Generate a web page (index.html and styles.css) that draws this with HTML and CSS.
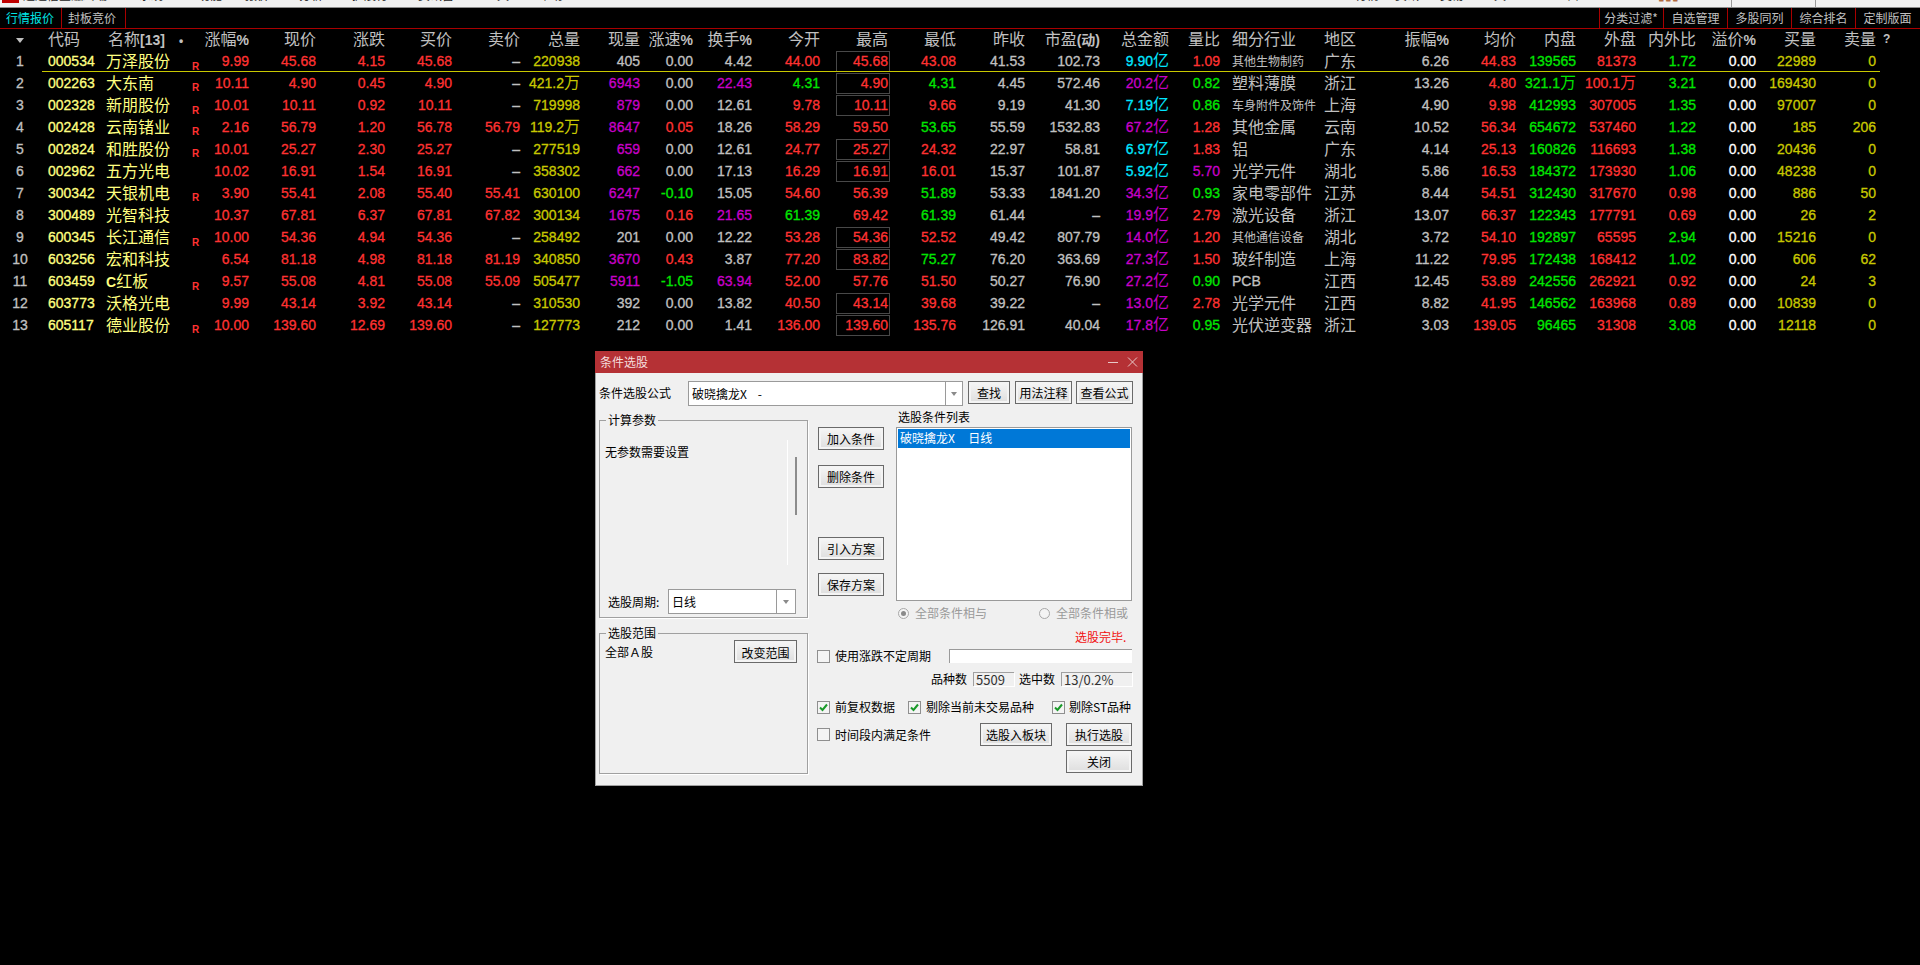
FILE: index.html
```html
<!DOCTYPE html>
<html lang="zh-CN">
<head>
<meta charset="utf-8">
<title>行情报价</title>
<link rel="stylesheet" href="styles.css">
</head>
<body>
<div class="topbar">
  <span class="logo"></span>
  <span class="mi m0">通达信金融终端</span>
  <span class="mi m1">系统</span>
  <span class="mi m2">功能</span>
  <span class="mi m3">报价</span>
  <span class="mi m4">分析</span>
  <span class="mi m5">扩展行</span>
  <span class="mi m6">资讯窗</span>
  <span class="mi m7">工具</span>
  <span class="mi m8">帮助</span>
  <span class="tb-spacer"></span>
  <span class="mi t1">行情</span>
  <span class="mi t2">资讯</span>
  <span class="mi t3">交易</span>
  <span class="mi t4">工具</span>
  <span class="mi t5">一</span>
  <span class="mi t6">口</span>
  <span class="mi t7 tone">▮▮▮</span>
  <span class="sep"></span>
  <span class="sep s2"></span>
</div>
<div class="tabs">
  <span class="tab on">行情报价</span>
  <span class="tab">封板竞价</span>
  <span class="tab-spacer"></span>
  <span class="rtab rf">分类过滤*</span>
  <span class="rtab">自选管理</span>
  <span class="rtab">多股同列</span>
  <span class="rtab">综合排名</span>
  <span class="rtab rl">定制版面</span>
</div>
<div class="quotes">
  <div class="row head">
    <span class="ctr"><em class="sort"></em></span><span class="l pl8">代码</span><span class="l pl10">名称<b>[13]</b><b class="dot">•</b></span><span></span>
    <span>涨幅<b>%</b></span><span>现价</span><span>涨跌</span><span>买价</span><span>卖价</span><span>总量</span><span>现量</span><span>涨速<b>%</b></span><span>换手<b>%</b></span><span>今开</span><span>最高</span><span>最低</span><span>昨收</span><span>市盈<b>(动)</b></span><span>总金额</span><span>量比</span><span class="l pl12">细分行业</span><span class="l">地区</span><span>振幅<b>%</b></span><span>均价</span><span>内盘</span><span>外盘</span><span>内外比</span><span>溢价<b>%</b></span><span>买量</span><span>卖量</span><span class="l q">?</span>
  </div>
  <div class="row sel"><span class="ctr">1</span><span class="l pl8 code">000534</span><span class="l pl8 nm">万泽股份</span><span class="rr">R</span><span class="r">9.99</span><span class="r">45.68</span><span class="r">4.15</span><span class="r">45.68</span><span>–</span><span class="y">220938</span><span>405</span><span>0.00</span><span>4.42</span><span class="r">44.00</span><span class="r bx">45.68</span><span class="r">43.08</span><span>41.53</span><span>102.73</span><span class="c">9.90<i>亿</i></span><span class="r">1.09</span><span class="l pl12 sm">其他生物制药</span><span class="l reg">广东</span><span>6.26</span><span class="r">44.83</span><span class="g">139565</span><span class="r">81373</span><span class="g">1.72</span><span class="w">0.00</span><span class="y">22989</span><span class="y">0</span></div>
  <div class="row"><span class="ctr">2</span><span class="l pl8 code">002263</span><span class="l pl8 nm">大东南</span><span class="rr">R</span><span class="r">10.11</span><span class="r">4.90</span><span class="r">0.45</span><span class="r">4.90</span><span>–</span><span class="y">421.2<i>万</i></span><span class="m">6943</span><span>0.00</span><span class="m">22.43</span><span class="g">4.31</span><span class="r bx">4.90</span><span class="g">4.31</span><span>4.45</span><span>572.46</span><span class="m">20.2<i>亿</i></span><span class="g">0.82</span><span class="l pl12 ind">塑料薄膜</span><span class="l reg">浙江</span><span>13.26</span><span class="r">4.80</span><span class="g">321.1<i>万</i></span><span class="r">100.1<i>万</i></span><span class="g">3.21</span><span class="w">0.00</span><span class="y">169430</span><span class="y">0</span></div>
  <div class="row"><span class="ctr">3</span><span class="l pl8 code">002328</span><span class="l pl8 nm">新朋股份</span><span class="rr">R</span><span class="r">10.01</span><span class="r">10.11</span><span class="r">0.92</span><span class="r">10.11</span><span>–</span><span class="y">719998</span><span class="m">879</span><span>0.00</span><span>12.61</span><span class="r">9.78</span><span class="r bx">10.11</span><span class="r">9.66</span><span>9.19</span><span>41.30</span><span class="c">7.19<i>亿</i></span><span class="g">0.86</span><span class="l pl12 sm">车身附件及饰件</span><span class="l reg">上海</span><span>4.90</span><span class="r">9.98</span><span class="g">412993</span><span class="r">307005</span><span class="g">1.35</span><span class="w">0.00</span><span class="y">97007</span><span class="y">0</span></div>
  <div class="row"><span class="ctr">4</span><span class="l pl8 code">002428</span><span class="l pl8 nm">云南锗业</span><span class="rr">R</span><span class="r">2.16</span><span class="r">56.79</span><span class="r">1.20</span><span class="r">56.78</span><span class="r">56.79</span><span class="y">119.2<i>万</i></span><span class="m">8647</span><span class="r">0.05</span><span>18.26</span><span class="r">58.29</span><span class="r">59.50</span><span class="g">53.65</span><span>55.59</span><span>1532.83</span><span class="m">67.2<i>亿</i></span><span class="r">1.28</span><span class="l pl12 ind">其他金属</span><span class="l reg">云南</span><span>10.52</span><span class="r">56.34</span><span class="g">654672</span><span class="r">537460</span><span class="g">1.22</span><span class="w">0.00</span><span class="y">185</span><span class="y">206</span></div>
  <div class="row"><span class="ctr">5</span><span class="l pl8 code">002824</span><span class="l pl8 nm">和胜股份</span><span class="rr">R</span><span class="r">10.01</span><span class="r">25.27</span><span class="r">2.30</span><span class="r">25.27</span><span>–</span><span class="y">277519</span><span class="m">659</span><span>0.00</span><span>12.61</span><span class="r">24.77</span><span class="r bx">25.27</span><span class="r">24.32</span><span>22.97</span><span>58.81</span><span class="c">6.97<i>亿</i></span><span class="r">1.83</span><span class="l pl12 ind">铝</span><span class="l reg">广东</span><span>4.14</span><span class="r">25.13</span><span class="g">160826</span><span class="r">116693</span><span class="g">1.38</span><span class="w">0.00</span><span class="y">20436</span><span class="y">0</span></div>
  <div class="row"><span class="ctr">6</span><span class="l pl8 code">002962</span><span class="l pl8 nm">五方光电</span><span></span><span class="r">10.02</span><span class="r">16.91</span><span class="r">1.54</span><span class="r">16.91</span><span>–</span><span class="y">358302</span><span class="m">662</span><span>0.00</span><span>17.13</span><span class="r">16.29</span><span class="r bx">16.91</span><span class="r">16.01</span><span>15.37</span><span>101.87</span><span class="c">5.92<i>亿</i></span><span class="m">5.70</span><span class="l pl12 ind">光学元件</span><span class="l reg">湖北</span><span>5.86</span><span class="r">16.53</span><span class="g">184372</span><span class="r">173930</span><span class="g">1.06</span><span class="w">0.00</span><span class="y">48238</span><span class="y">0</span></div>
  <div class="row"><span class="ctr">7</span><span class="l pl8 code">300342</span><span class="l pl8 nm">天银机电</span><span class="rr">R</span><span class="r">3.90</span><span class="r">55.41</span><span class="r">2.08</span><span class="r">55.40</span><span class="r">55.41</span><span class="y">630100</span><span class="m">6247</span><span class="g">-0.10</span><span>15.05</span><span class="r">54.60</span><span class="r">56.39</span><span class="g">51.89</span><span>53.33</span><span>1841.20</span><span class="m">34.3<i>亿</i></span><span class="g">0.93</span><span class="l pl12 ind">家电零部件</span><span class="l reg">江苏</span><span>8.44</span><span class="r">54.51</span><span class="g">312430</span><span class="r">317670</span><span class="r">0.98</span><span class="w">0.00</span><span class="y">886</span><span class="y">50</span></div>
  <div class="row"><span class="ctr">8</span><span class="l pl8 code">300489</span><span class="l pl8 nm">光智科技</span><span></span><span class="r">10.37</span><span class="r">67.81</span><span class="r">6.37</span><span class="r">67.81</span><span class="r">67.82</span><span class="y">300134</span><span class="m">1675</span><span class="r">0.16</span><span class="m">21.65</span><span class="g">61.39</span><span class="r">69.42</span><span class="g">61.39</span><span>61.44</span><span>–</span><span class="m">19.9<i>亿</i></span><span class="r">2.79</span><span class="l pl12 ind">激光设备</span><span class="l reg">浙江</span><span>13.07</span><span class="r">66.37</span><span class="g">122343</span><span class="r">177791</span><span class="r">0.69</span><span class="w">0.00</span><span class="y">26</span><span class="y">2</span></div>
  <div class="row"><span class="ctr">9</span><span class="l pl8 code">600345</span><span class="l pl8 nm">长江通信</span><span class="rr">R</span><span class="r">10.00</span><span class="r">54.36</span><span class="r">4.94</span><span class="r">54.36</span><span>–</span><span class="y">258492</span><span>201</span><span>0.00</span><span>12.22</span><span class="r">53.28</span><span class="r bx">54.36</span><span class="r">52.52</span><span>49.42</span><span>807.79</span><span class="m">14.0<i>亿</i></span><span class="r">1.20</span><span class="l pl12 sm">其他通信设备</span><span class="l reg">湖北</span><span>3.72</span><span class="r">54.10</span><span class="g">192897</span><span class="r">65595</span><span class="g">2.94</span><span class="w">0.00</span><span class="y">15216</span><span class="y">0</span></div>
  <div class="row"><span class="ctr">10</span><span class="l pl8 code">603256</span><span class="l pl8 nm">宏和科技</span><span></span><span class="r">6.54</span><span class="r">81.18</span><span class="r">4.98</span><span class="r">81.18</span><span class="r">81.19</span><span class="y">340850</span><span class="m">3670</span><span class="r">0.43</span><span>3.87</span><span class="r">77.20</span><span class="r bx">83.82</span><span class="g">75.27</span><span>76.20</span><span>363.69</span><span class="m">27.3<i>亿</i></span><span class="r">1.50</span><span class="l pl12 ind">玻纤制造</span><span class="l reg">上海</span><span>11.22</span><span class="r">79.95</span><span class="g">172438</span><span class="r">168412</span><span class="g">1.02</span><span class="w">0.00</span><span class="y">606</span><span class="y">62</span></div>
  <div class="row"><span class="ctr">11</span><span class="l pl8 code">603459</span><span class="l pl8 nm"><b>C</b>红板</span><span class="rr">R</span><span class="r">9.57</span><span class="r">55.08</span><span class="r">4.81</span><span class="r">55.08</span><span class="r">55.09</span><span class="y">505477</span><span class="m">5911</span><span class="g">-1.05</span><span class="m">63.94</span><span class="r">52.00</span><span class="r">57.76</span><span class="r">51.50</span><span>50.27</span><span>76.90</span><span class="m">27.2<i>亿</i></span><span class="g">0.90</span><span class="l pl12">PCB</span><span class="l reg">江西</span><span>12.45</span><span class="r">53.89</span><span class="g">242556</span><span class="r">262921</span><span class="r">0.92</span><span class="w">0.00</span><span class="y">24</span><span class="y">3</span></div>
  <div class="row"><span class="ctr">12</span><span class="l pl8 code">603773</span><span class="l pl8 nm">沃格光电</span><span></span><span class="r">9.99</span><span class="r">43.14</span><span class="r">3.92</span><span class="r">43.14</span><span>–</span><span class="y">310530</span><span>392</span><span>0.00</span><span>13.82</span><span class="r">40.50</span><span class="r bx">43.14</span><span class="r">39.68</span><span>39.22</span><span>–</span><span class="m">13.0<i>亿</i></span><span class="r">2.78</span><span class="l pl12 ind">光学元件</span><span class="l reg">江西</span><span>8.82</span><span class="r">41.95</span><span class="g">146562</span><span class="r">163968</span><span class="r">0.89</span><span class="w">0.00</span><span class="y">10839</span><span class="y">0</span></div>
  <div class="row"><span class="ctr">13</span><span class="l pl8 code">605117</span><span class="l pl8 nm">德业股份</span><span class="rr">R</span><span class="r">10.00</span><span class="r">139.60</span><span class="r">12.69</span><span class="r">139.60</span><span>–</span><span class="y">127773</span><span>212</span><span>0.00</span><span>1.41</span><span class="r">136.00</span><span class="r bx">139.60</span><span class="r">135.76</span><span>126.91</span><span>40.04</span><span class="m">17.8<i>亿</i></span><span class="g">0.95</span><span class="l pl12 ind">光伏逆变器</span><span class="l reg">浙江</span><span>3.03</span><span class="r">139.05</span><span class="g">96465</span><span class="r">31308</span><span class="g">3.08</span><span class="w">0.00</span><span class="y">12118</span><span class="y">0</span></div>
</div>

<div class="dialog">
  <div class="title"><span>条件选股</span>
    <svg class="winbtns" width="30" height="12" viewBox="0 0 30 12"><path d="M0 6.5H10" stroke="#e8c8c8" fill="none"/><path d="M20 1.5L29 10.5M29 1.5L20 10.5" stroke="#e8c8c8" fill="none"/></svg>
  </div>
  <div class="body">
    <div class="formula">
      <label class="flabel">条件选股公式</label>
      <div class="combo cmain"><span class="ctext">破晓擒龙X&nbsp;&nbsp;&nbsp;&nbsp;-</span><span class="drop"><em></em></span></div>
      <button class="btn b42">查找</button>
      <button class="btn b57">用法注释</button>
      <button class="btn b57 g4">查看公式</button>
    </div>
    <div class="main">
      <div class="left">
        <fieldset class="group g1">
          <legend>计算参数</legend>
          <div class="noparam">无参数需要设置</div>
          <span class="vline"></span>
          <span class="thumb"></span>
          <div class="period">
            <label>选股周期:</label>
            <div class="combo cperiod"><span class="ctext">日线</span><span class="drop d2"><em></em></span></div>
          </div>
        </fieldset>
        <fieldset class="group g2">
          <legend>选股范围</legend>
          <div class="scope">
            <span>全部Ａ股</span>
            <button class="btn b63">改变范围</button>
          </div>
        </fieldset>
      </div>
      <div class="right">
        <div class="upper">
          <div class="mid">
            <button class="btn b66">加入条件</button>
            <button class="btn b66 mt15">删除条件</button>
            <button class="btn b66 mt49">引入方案</button>
            <button class="btn b66 mt13">保存方案</button>
          </div>
          <div class="cond">
            <div class="ltitle">选股条件列表</div>
            <div class="list"><div class="item">破晓擒龙X&nbsp;&nbsp;&nbsp;&nbsp;&nbsp;日线</div></div>
            <div class="radios">
              <span class="radio on"></span><span class="rlabel">全部条件相与</span>
              <span class="radio radio2"></span><span class="rlabel">全部条件相或</span>
            </div>
            <div class="done">选股完毕.</div>
          </div>
        </div>
        <div class="opt o1">
          <span class="ck"></span><span class="cl">使用涨跌不定周期</span>
          <span class="range"></span>
        </div>
        <div class="opt o2">
          <span>品种数</span><span class="field f41">5509</span>
          <span class="ml5">选中数</span><span class="field f71">13/0.2%</span>
        </div>
        <div class="opt o3">
          <span class="w91"><span class="ck on"><svg width="11" height="11" viewBox="0 0 11 11"><path d="M2 5.5L4.5 8L9 2.5" stroke="#1a9a2a" stroke-width="2" fill="none"/></svg></span><span class="cl">前复权数据</span></span>
          <span class="w144"><span class="ck on"><svg width="11" height="11" viewBox="0 0 11 11"><path d="M2 5.5L4.5 8L9 2.5" stroke="#1a9a2a" stroke-width="2" fill="none"/></svg></span><span class="cl">剔除当前未交易品种</span></span>
          <span class="wrest"><span class="ck on"><svg width="11" height="11" viewBox="0 0 11 11"><path d="M2 5.5L4.5 8L9 2.5" stroke="#1a9a2a" stroke-width="2" fill="none"/></svg></span><span class="cl cl4">剔除ST品种</span></span>
        </div>
        <div class="opt o4">
          <span class="ck"></span><span class="cl">时间段内满足条件</span>
          <button class="btn b72">选股入板块</button>
          <button class="btn b66 ml14">执行选股</button>
        </div>
        <div class="opt o5">
          <button class="btn b66">关闭</button>
        </div>
      </div>
    </div>
  </div>
</div>
</body>
</html>
```
FILE: styles.css
```css
* { box-sizing: border-box; }
html, body { margin: 0; height: 100%; }
body {
  background: #000;
  color: #c0c0c0;
  font-family: "Liberation Sans", "Noto Sans CJK SC", sans-serif;
  overflow: hidden;
  position: relative;
}

/* clipped menu strip */
.topbar {
  height: 8px;
  background: #f0f0f0;
  border-bottom: 1px solid #8c8c8c;
  display: flex;
  overflow: hidden;
  position: relative;
}
.logo { width: 17px; height: 3px; margin-left: 2px; background: #c00000; flex: none; }
.mi {
  flex: none;
  font: 12px/14px "Noto Sans CJK SC", sans-serif;
  color: #222;
  margin-top: -12px;
  height: 14px;
  white-space: nowrap;
}
.m0 { margin-left: 4px; width: 84px; }
.m1 { margin-left: 32px; width: 26px; }
.m2 { margin-left: 33px; width: 24px; }
.m3 { margin-left: 23px; width: 28px; }
.m4 { margin-left: 26px; width: 27px; }
.m5 { margin-left: 26px; width: 42px; }
.m6 { margin-left: 24px; width: 40px; }
.m7 { margin-left: 27px; width: 27px; }
.m8 { margin-left: 27px; width: 27px; }
.tb-spacer { flex: 1; }
.t1 { width: 24px; }
.t2 { margin-left: 16px; width: 27px; }
.t3 { margin-left: 18px; width: 25px; }
.t4 { margin-left: 17px; width: 29px; }
.t5 { margin-left: 30px; width: 12px; }
.t6 { margin-left: 14px; width: 12px; }
.t7 { margin-left: 79px; margin-right: 240px; width: 22px; overflow: hidden; color: #b06a40; }
.sep { position: absolute; left: 1731px; top: 0; width: 1px; height: 7px; background: #999; }
.s2 { left: 1815px; }

/* tabs */
.tabs {
  height: 21px;
  display: flex;
  border-bottom: 1px solid #a80000;
  font: 12px/20px "Noto Sans CJK SC", sans-serif;
  color: #c0c0c0;
}
.tab { width: 64px; padding-left: 6px; border-right: 1px solid #a80000; white-space: nowrap; }
.tab.on { width: 62px; color: #00e6e6; }
.tab-spacer { flex: 1; }
.rtab { width: 64px; text-align: center; border-left: 1px solid #a80000; white-space: nowrap; }
.rf { width: 64px; padding-right: 1px; }
.rl { width: 65px; padding-left: 1px; padding-right: 2px; }

/* quote grid */
.quotes { display: flex; flex-direction: column; }
.row {
  display: grid;
  grid-template-columns: 40px 58px 94px 12px 45px 67px 69px 67px 68px 60px 60px 53px 59px 68px 68px 68px 69px 75px 69px 51px 104px 66px 59px 67px 60px 60px 60px 60px 60px 60px 30px;
  height: 22px;
  line-height: 22px;
  font-size: 14px;
  -webkit-text-stroke: 0.3px currentColor;
  position: relative;
  white-space: nowrap;
}
.row > span { text-align: right; position: relative; }
.row > .l { text-align: left; }
.row > .ctr { text-align: center; }
.row.sel::after {
  content: "";
  position: absolute;
  left: 42px;
  width: 1838px;
  bottom: 0;
  height: 1px;
  background: #c8c800;
}
.head { height: 21px; line-height: 21px; font-size: 16px; color: #c0c0c0; -webkit-text-stroke: 0; }
.head b { font-size: 14px; }
.head .dot { margin-left: 14px; font-size: 12px; }
.head .q { font-size: 12px; font-weight: bold; padding-left: 7px; }
.sort {
  display: inline-block;
  width: 0; height: 0;
  border-left: 4px solid transparent;
  border-right: 4px solid transparent;
  border-top: 5px solid #c0c0c0;
  vertical-align: 2px;
}
.pl8 { padding-left: 8px; }
.pl10 { padding-left: 10px; }
.pl12 { padding-left: 12px; }
.code { color: #ffff80; }
.nm { color: #ffff80; font-size: 16px; line-height: 23px; -webkit-text-stroke: 0; }
.nm b { font-size: 14px; }
.ind, .reg { font-size: 16px; line-height: 23px; -webkit-text-stroke: 0; }
.sm { font-size: 12px; line-height: 24px; -webkit-text-stroke: 0; }
.row > .rr {
  color: #ff3232;
  font-size: 10px;
  font-weight: bold;
  line-height: 14px;
  text-align: left;
  align-self: end;
  -webkit-text-stroke: 0;
}
.row i { font-style: normal; font-weight: normal; font-size: 16px; -webkit-text-stroke: 0; }
.r { color: #ff3232; }
.g { color: #00e600; }
.m { color: #c800c8; }
.c { color: #00e6ff; }
.y { color: #c8c800; }
.w { color: #fff; }
.bx::before {
  content: "";
  position: absolute;
  right: -2px;
  top: 1px;
  width: 52px;
  height: 19px;
  border: 1px solid #484848;
}

/* dialog window */
.dialog {
  position: absolute;
  left: 595px;
  top: 351px;
  width: 548px;
  height: 435px;
  background: #f0f0f0;
  border: 1px solid #a0a0a0;
  border-top: 0;
  color: #000;
  font: 12px/14px "Noto Sans CJK SC", sans-serif;
}
.title {
  height: 22px;
  margin: 0 -1px;
  background: #b53135;
  color: #f4dede;
  padding: 4px 0 0 5px;
  position: relative;
  display: flex;
  justify-content: space-between;
}
.winbtns { margin: 1px 5px 0 0; }
.body { padding: 8px 9px 0 3px; }
.formula { display: flex; align-items: flex-start; height: 25px; }
.flabel { width: 89px; line-height: 24px; }
.combo {
  display: flex;
  background: #fff;
  border: 1px solid #9a9a9a;
}
.cmain { width: 275px; height: 25px; margin-right: 5px; }
.ctext { flex: 1; padding-left: 3px; line-height: 23px; white-space: nowrap; }
.drop {
  width: 17px;
  border-left: 1px solid #9a9a9a;
  display: flex;
  align-items: center;
  justify-content: center;
}
.drop em {
  width: 0; height: 0;
  border-left: 3.5px solid transparent;
  border-right: 3.5px solid transparent;
  border-top: 4px solid #8a8a8a;
}
.btn {
  height: 23px;
  padding: 0;
  font: inherit;
  color: #000;
  border: 1px solid #6a6a6a;
  background: linear-gradient(#f6f6f6, #dedede);
  box-shadow: inset 0 0 0 2px #f4f4f4;
  white-space: nowrap;
}
.b42 { width: 42px; margin-right: 5px; }
.b57 { width: 57px; }
.g4 { margin-left: 4px; }
.b63 { width: 63px; }
.b66 { width: 66px; display: block; }
.b72 { width: 72px; margin-left: auto; }
.ml14 { margin-left: 14px; }
.mt15 { margin-top: 15px; }
.mt49 { margin-top: 49px; }
.mt13 { margin-top: 13px; }

.main { display: flex; margin-top: 5px; }
.left { width: 209px; padding-top: 9px; flex: none; }
.group {
  margin: 0;
  padding: 0;
  min-width: 0;
  border: 1px solid #a0a0a0;
  box-shadow: 1px 1px 0 #fff;
  position: relative;
}
.group legend {
  margin-left: 6px;
  padding: 0 2px;
  line-height: 12px;
}
.g1 { height: 204px; margin-top: -6px; }
.g2 { height: 147px; margin-top: 9px; }
.noparam { margin: 19px 0 0 5px; }
.vline { position: absolute; left: 187px; top: 14px; width: 1px; height: 125px; background: #fff; }
.thumb { position: absolute; left: 195px; top: 31px; width: 2px; height: 58px; background: #8c8c8c; }
.period { display: flex; align-items: center; position: absolute; left: 8px; top: 163px; }
.period label { width: 60px; }
.cperiod { width: 128px; height: 25px; }
.d2 { width: 19px; }
.scope { display: flex; justify-content: space-between; padding: 1px 10px 0 5px; margin-top: 0; line-height: 23px; }

.right { width: 316px; margin-left: 9px; flex: none; }
.upper { display: flex; height: 233px; }
.mid { padding: 16px 0 0 1px; width: 79px; flex: none; }
.cond { width: 237px; }
.ltitle { line-height: 12px; padding-left: 2px; }
.list {
  margin-top: 4px;
  width: 236px;
  height: 174px;
  background: #fff;
  border: 1px solid #9a9a9a;
  padding: 1px;
}
.item { height: 19px; background: #0078d7; color: #fff; padding-left: 2px; line-height: 18px; white-space: nowrap; }
.radios { display: flex; align-items: center; margin-top: 5px; height: 14px; color: #9a9a9a; }
.radio {
  width: 11px; height: 11px;
  margin-left: 2px;
  border-radius: 50%;
  border: 1px solid #a8a8a8;
  background: #f4f4f4;
  flex: none;
  position: relative;
}
.radio.on::after {
  content: "";
  position: absolute;
  left: 2px; top: 2px;
  width: 5px; height: 5px;
  border-radius: 50%;
  background: #8a8a8a;
}
.radio2 { margin-left: 52px; }
.rlabel { margin-left: 6px; white-space: nowrap; }
.done { color: #f01010; margin: 10px 0 0 179px; white-space: nowrap; }

.opt { display: flex; align-items: center; white-space: nowrap; }
.ck {
  width: 13px; height: 13px;
  flex: none;
  border: 1px solid #8f8f8f;
  background: #f4f4f4;
  display: inline-flex;
  align-items: center;
  justify-content: center;
}
.cl { margin-left: 5px; }
.o1 { margin-top: 5px; height: 14px; }
.range {
  margin: 0 1px 0 auto;
  width: 183px; height: 14px;
  background: #fff;
  border-top: 1px solid #9a9a9a;
  border-left: 1px solid #9a9a9a;
}
.o2 { margin-top: 9px; height: 14px; justify-content: flex-end; padding-right: 1px; }
.field {
  height: 14px;
  margin-left: 6px;
  padding-left: 2px;
  font-size: 13px;
  line-height: 13px;
  border-top: 1px solid #a0a0a0;
  border-left: 1px solid #a0a0a0;
  box-shadow: 1px 1px 0 #fff;
  color: #333;
}
.f41 { width: 41px; }
.f71 { width: 71px; }
.ml5 { margin-left: 5px; }
.o3 { margin-top: 14px; height: 14px; }
.o3 > span { display: flex; align-items: center; flex: none; }
.w91 { width: 91px; }
.w144 { width: 144px; }
.cl4 { margin-left: 4px; }
.o4 { margin-top: 9px; height: 23px; padding-right: 1px; }
.o5 { margin-top: 4px; justify-content: flex-end; padding-right: 1px; }
```
